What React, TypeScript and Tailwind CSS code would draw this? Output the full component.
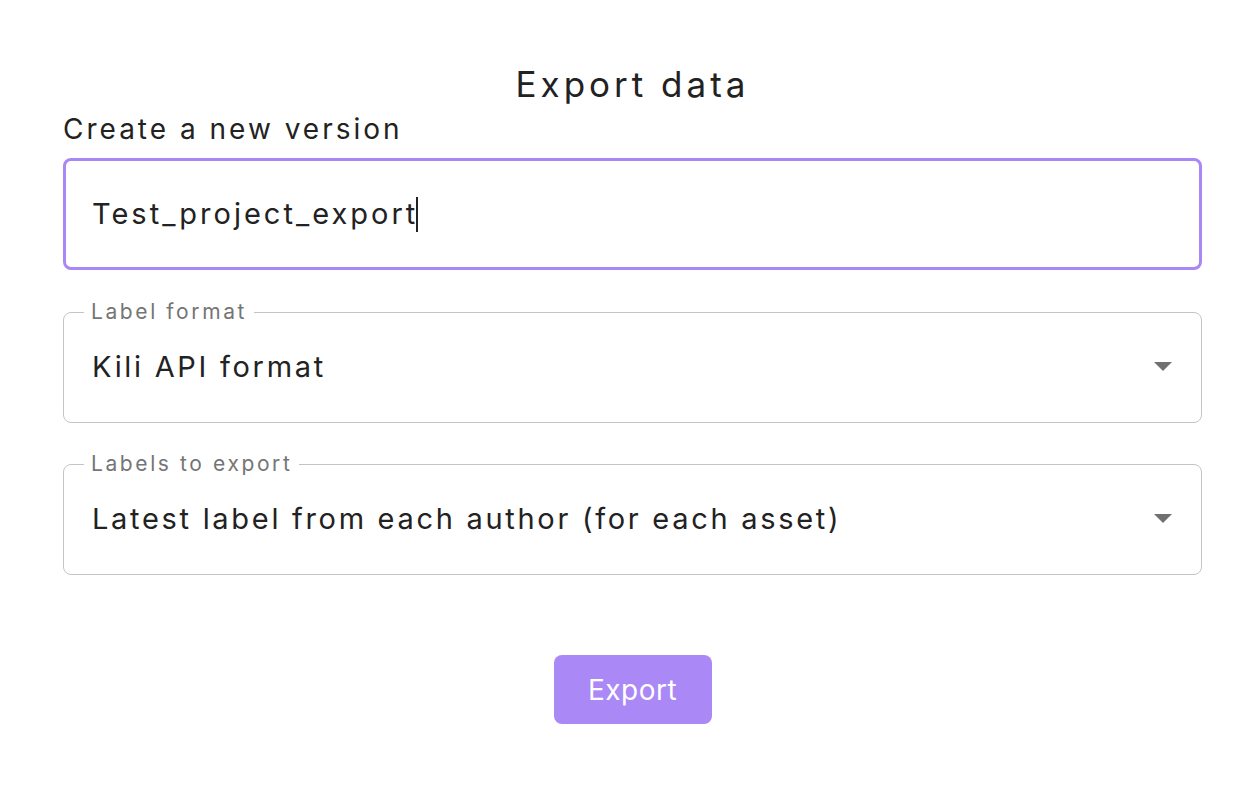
const font = { fontFamily: 'Inter, "Noto Sans", sans-serif' };

function OutlinedSelect({ label, value }: { label: string; value: string }) {
  return (
    <fieldset className="relative h-[122px] rounded-lg border border-[#c4c4c4] px-[20px]">
      <legend className="px-[7px] text-[21px] leading-[22px] tracking-[2.6px] text-[#757575]">
        {label}
      </legend>
      <div className="flex h-[100px] items-center justify-between pb-[12px] pl-[8px] pr-[8px]">
        <span className="text-[29px] tracking-[2.7px] text-[#222222]">{value}</span>
        <svg width="20" height="10" viewBox="0 0 20 10">
          <path d="M1 0 L19 0 L10 9 Z" fill="#707070" />
        </svg>
      </div>
    </fieldset>
  );
}

export default function App() {
  return (
    <div className="min-h-[786px] bg-white" style={font}>
      <div className="ml-[63px] flex w-[1139px] flex-col pt-[62px]">
        <h1 className="text-center text-[35px] leading-[44px] tracking-[4px] text-[#222222]">
          Export data
        </h1>
        <p className="mt-[4px] text-[28px] leading-[38px] tracking-[3px] text-[#222222]">
          Create a new version
        </p>
        <div className="mt-[10px] flex h-[112px] items-center rounded-lg border-[3px] border-[#a988f5] pl-[26px]">
          <span className="text-[29px] tracking-[3px] text-[#222222]">Test_project_export</span>
          <span className="-ml-[2px] h-[35px] w-[2px] bg-[#222222]" />
        </div>
        <div className="mt-[31px] flex flex-col gap-[30px]">
          <OutlinedSelect label="Label format" value="Kili API format" />
          <OutlinedSelect
            label="Labels to export"
            value="Latest label from each author (for each asset)"
          />
        </div>
        <div className="mt-[80px] flex justify-center">
          <button
            type="button"
            className="h-[69px] w-[158px] rounded-lg bg-[#aa88f6] text-[28px] tracking-[0.5px] text-white"
          >
            Export
          </button>
        </div>
      </div>
    </div>
  );
}
